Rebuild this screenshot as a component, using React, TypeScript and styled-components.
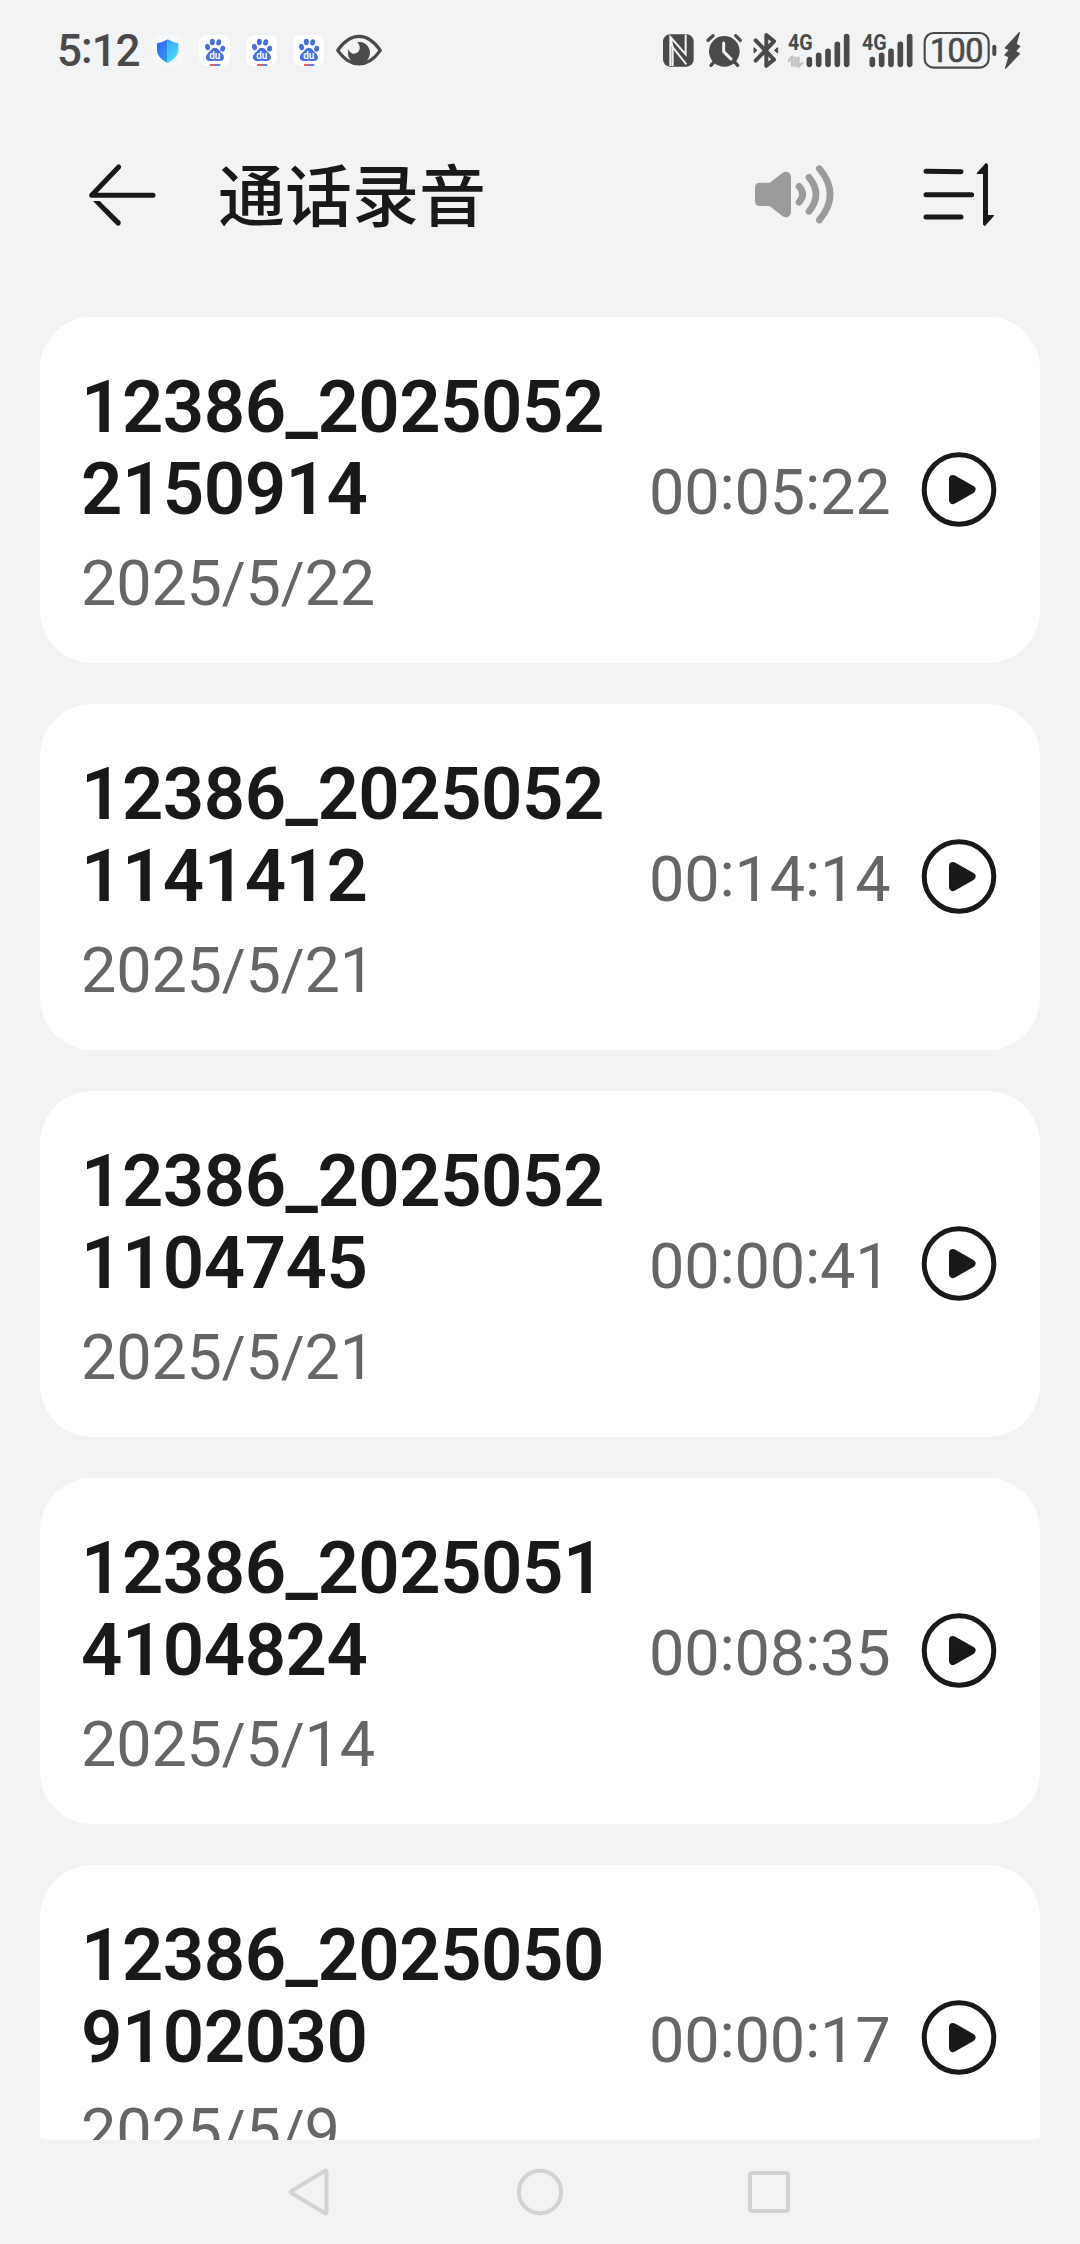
import React from 'react';
import styled, { createGlobalStyle } from 'styled-components';

const INK = '#191919';
const STATUS = '#4a4a4a';
const MUTED = '#666666';
const BG = '#f1f3f5';

const GlobalStyle = createGlobalStyle`
  * { box-sizing: border-box; }
  body {
    margin: 0;
    background: ${BG};
    font-family: Roboto, "Noto Sans CJK SC", sans-serif;
  }
`;

const Screen = styled.div`
  display: flex;
  flex-direction: column;
  width: 1080px;
  height: 2244px;
  background: ${BG};
  overflow: hidden;
`;

const StatusBar = styled.header`
  display: flex;
  justify-content: space-between;
  height: 90px;
  padding: 15px 53.3px 0 57px;
  color: ${STATUS};
`;

const StatusGroup = styled.div`
  display: flex;
  align-items: flex-start;
`;

const Clock = styled.span`
  width: 93px;
  font-size: 44px;
  font-weight: 500;
  line-height: 72px;
  letter-spacing: -1.4px;
  white-space: nowrap;
`;

const ClockColon = styled.span`
  margin: 0 0.5px;
  line-height: 1;
  vertical-align: 3px;
`;

const Glyph = styled.svg`
  display: block;
  flex: none;
  overflow: visible;
`;

const TitleBar = styled.div`
  display: flex;
  align-items: center;
  height: 110px;
  margin-top: 50px;
  padding: 0 75px 0 80px;
`;

const Title = styled.h1`
  flex: 1;
  margin: 0;
  padding: 0 0 7px 54px;
  font-family: "Noto Sans CJK SC", sans-serif;
  font-size: 67px;
  font-weight: 500;
  line-height: 103px;
  color: ${INK};
`;

const IconButton = styled.button<{ $tone?: string; $gap?: number }>`
  padding: 0;
  border: 0;
  margin-left: ${(p) => p.$gap || 0}px;
  background: none;
  color: ${(p) => p.$tone || INK};
`;

const List = styled.main`
  display: flex;
  flex-direction: column;
  gap: 41px;
  height: 1823px;
  margin: 67px 40px 0;
  overflow: hidden;
  border-radius: 0 0 10px 10px / 0 0 3px 3px;
`;

const Card = styled.article`
  display: flex;
  flex: none;
  align-items: center;
  height: 346px;
  padding: 0 43.5px 0 41px;
  border-radius: 52px;
  background: #fff;
`;

const Info = styled.div`
  flex: 1;
  min-width: 0;
  padding-top: 8px;
`;

const Name = styled.div`
  width: 540px;
  font-size: 72.5px;
  font-weight: 600;
  line-height: 82px;
  letter-spacing: -0.5px;
  word-break: break-all;
  color: ${INK};
`;

const DateText = styled.div`
  margin-top: 16px;
  font-size: 63px;
  line-height: 74px;
  letter-spacing: -0.2px;
  color: ${MUTED};
`;

const Slash = styled.span`
  font-size: 58px;
  line-height: 1;
  vertical-align: 2px;
`;

const Duration = styled.div`
  margin: 5px 30px 0 0;
  font-size: 63px;
  line-height: 74px;
  letter-spacing: -0.2px;
  white-space: nowrap;
  color: ${MUTED};
`;

const Colon = styled.span`
  vertical-align: 5px;
  line-height: 1;
`;

const NavBar = styled.nav`
  display: flex;
  justify-content: space-between;
  align-items: center;
  height: 104px;
  padding: 0 285px 0 285px;
`;

const recordings = [
  { name: '12386_20250522150914', date: '2025/5/22', duration: '00:05:22' },
  { name: '12386_20250521141412', date: '2025/5/21', duration: '00:14:14' },
  { name: '12386_20250521104745', date: '2025/5/21', duration: '00:00:41' },
  { name: '12386_20250514104824', date: '2025/5/14', duration: '00:08:35' },
  { name: '12386_20250509102030', date: '2025/5/9', duration: '00:00:17' },
];

const ShieldIcon = () => (
  <Glyph width="45" height="75" viewBox="330 0 135 225">
    <defs>
      <linearGradient id="shieldL" x1="0" y1="0" x2="0.6" y2="1">
        <stop offset="0" stopColor="#2a63f4" />
        <stop offset="1" stopColor="#2f95fb" />
      </linearGradient>
      <linearGradient id="shieldR" x1="0" y1="0" x2="0.3" y2="1">
        <stop offset="0" stopColor="#35a5fd" />
        <stop offset="1" stopColor="#4cdcfb" />
      </linearGradient>
    </defs>
    <rect x="338" y="60" width="92" height="93" rx="22" fill="#f6f7f9" />
    <path d="M383 73 Q366 84 351 85 V106 Q352 130 383 144Z" fill="url(#shieldL)" />
    <path d="M383 73 Q400 84 415 85 V106 Q414 130 383 144Z" fill="url(#shieldR)" />
  </Glyph>
);

const PawIcon = () => (
  <Glyph width="47" height="75" viewBox="0 0 141 225">
    <rect x="13" y="60" width="92" height="93" rx="22" fill="#fff" />
    <g fill="#4470e2">
      <ellipse cx="37.5" cy="96" rx="7.5" ry="9.5" transform="rotate(-12 37.5 96)" />
      <ellipse cx="52" cy="81" rx="7.5" ry="9.5" />
      <ellipse cx="71" cy="82" rx="7.5" ry="9.5" transform="rotate(10 71 82)" />
      <ellipse cx="83" cy="101" rx="7.5" ry="9" transform="rotate(12 83 101)" />
      <path d="M60 98 C69 98 73 108 79 113 C91 122 89 138 75 138 C68 138 66 137 60 137 C54 137 50 138 45 138 C30 138 29 122 40 113 C47 107 51 98 60 98Z" />
    </g>
    <text x="59.5" y="133" textAnchor="middle" fontFamily="Roboto, sans-serif" fontSize="30" fontWeight="600" fill="#fff">du</text>
    <path d="M45 150H60" stroke="#dd4150" strokeWidth="5" />
    <path d="M60 150H76" stroke="#4068de" strokeWidth="5" />
  </Glyph>
);

const EyeIcon = () => (
  <Glyph width="55" height="75" viewBox="888 0 165 225">
    <path d="M893 106 Q922 64 957 64 Q992 64 1021 106 Q992 147 957 147 Q922 147 893 106Z" fill="none" stroke="currentColor" strokeWidth="9.5" strokeLinejoin="round" />
    <path d="M952 81 A33 33 0 1 1 926 102 C930 117 941 119 951 113 C963 106 961 92 952 81Z" fill="currentColor" />
  </Glyph>
);

const NfcIcon = () => (
  <Glyph width="41.67" height="75" viewBox="60 0 125 225">
    <rect x="69" y="58" width="92" height="97" rx="21" fill="currentColor" />
    <path d="M91 153 V66 L137 118 V59 M91 66 L98 96 L139 148 M98 96 V153" fill="none" stroke={BG} strokeWidth="6" />
  </Glyph>
);

const AlarmIcon = () => (
  <Glyph width="45" height="75" viewBox="185 0 135 225">
    <g fill="none" stroke="currentColor" strokeWidth="10" strokeLinecap="round">
      <path d="M203 76 L218 62 M300 76 L286 62 M220 142 L212 151 M284 142 L292 151" />
    </g>
    <circle cx="252" cy="109" r="46" fill="currentColor" />
    <path d="M250 84 V110 L272 132" fill="none" stroke={BG} strokeWidth="9" strokeLinecap="round" strokeLinejoin="round" />
  </Glyph>
);

const BluetoothIcon = () => (
  <Glyph width="36.67" height="75" viewBox="320 0 110 225">
    <path d="M346 76 L401 134 L378 152 V60 L401 79 L346 137" fill="none" stroke="currentColor" strokeWidth="12" strokeLinecap="round" strokeLinejoin="round" />
    <path d="M341 98 L350 106 L341 114Z M412 98 L402 106 L412 114Z" fill="currentColor" stroke="currentColor" strokeWidth="3" />
  </Glyph>
);

const SignalIcon = ({ data, width }: { data?: boolean; width: number }) => (
  <Glyph width={width / 3} height="75" viewBox={`0 0 ${width} 225`}>
    <text x="15" y="105" fontFamily="Roboto, sans-serif" fontSize="64" fontWeight="700" fill="currentColor" textLength="74" lengthAdjust="spacingAndGlyphs">4G</text>
    {data && (
      <path d="M16 140 L28 125 V155 M60 142 L46 155 V125 M37 125V155" fill="none" stroke="#c3c5c7" strokeWidth="8" strokeLinejoin="round" />
    )}
    <path
      transform={data ? undefined : 'translate(-33 0)'}
      d="M79 134V148 M107 121V148 M135 109V148 M163 88V148 M191 65V148"
      stroke="currentColor"
      strokeWidth="17"
      strokeLinecap="round"
    />
  </Glyph>
);

const BatteryIcon = () => (
  <Glyph width="81.67" height="75" viewBox="835 0 245 225">
    <rect x="855" y="54" width="192" height="104" rx="27" fill="none" stroke="currentColor" strokeWidth="6.5" />
    <path d="M1064 95V117" stroke="currentColor" strokeWidth="12" strokeLinecap="round" />
    <text x="951" y="141" textAnchor="middle" fontFamily="Roboto, sans-serif" fontSize="97" fontWeight="400" stroke="currentColor" strokeWidth="2" fill="currentColor" textLength="160">100</text>
  </Glyph>
);

const BoltIcon = () => (
  <Glyph width="26.67" height="75" viewBox="1080 0 80 225">
    <path d="M1138 53 L1096 99 L1109 105 L1095 120 L1107 126 L1097 159 L1138 116 L1126 109 L1139 94 L1128 88Z" fill="currentColor" stroke="currentColor" strokeWidth="4" strokeLinejoin="round" />
  </Glyph>
);

const BackIcon = () => (
  <Glyph width="84" height="110" viewBox="60 0 252 330">
    <path d="M279 166 H95 L176 81" fill="none" stroke="currentColor" strokeWidth="15" strokeLinecap="round" strokeLinejoin="round" />
    <path d="M99 183 H119 L181 244 Q184 250 180 255 Q175 260 169 255Z" fill="currentColor" />
  </Glyph>
);

const SpeakerIcon = () => (
  <Glyph width="100" height="110" viewBox="75 0 300 330">
    <path d="M120 128 H149 L187 99 C198 91 213 97 213 112 V215 C213 230 198 236 187 228 L149 198 H120 Q105 198 105 183 V143 Q105 128 120 128Z" fill="currentColor" />
    <path d="M237 139 Q259 163 237 187 M267 112 Q309 163 267 214 M298 86 Q363 163 298 240" fill="none" stroke="currentColor" strokeWidth="20" strokeLinecap="round" />
  </Glyph>
);

const SortIcon = () => (
  <Glyph width="85" height="110" viewBox="600 0 255 330">
    <path d="M618 94 L723 95 M618 164 H755 M618 231 H723" stroke="currentColor" strokeWidth="15" strokeLinecap="round" />
    <path d="M798 71 L802 74 V227 H820 L794 256 L791 253 V100 H772Z" fill="currentColor" stroke="currentColor" strokeWidth="4" strokeLinejoin="round" />
  </Glyph>
);

const PlayIcon = () => (
  <Glyph width="76" height="76" viewBox="0 0 76 76">
    <circle cx="38" cy="37.5" r="34.8" fill="none" stroke="currentColor" strokeWidth="5" />
    <path d="M32 27 L50.5 37.5 L32 48Z" fill="currentColor" stroke="currentColor" strokeWidth="8" strokeLinejoin="round" />
  </Glyph>
);

function Separated({ value, mark, as: Mark }: { value: string; mark: string; as: React.ElementType }) {
  return (
    <>
      {value.split(mark).map((part, i) => (
        <React.Fragment key={i}>
          {i > 0 && <Mark>{mark}</Mark>}
          {part}
        </React.Fragment>
      ))}
    </>
  );
}

export default function App() {
  return (
    <>
      <GlobalStyle />
      <Screen>
        <StatusBar>
          <StatusGroup>
            <Clock>5<ClockColon>:</ClockColon>12</Clock>
            <ShieldIcon />
            <PawIcon />
            <PawIcon />
            <PawIcon />
            <EyeIcon />
          </StatusGroup>
          <StatusGroup>
            <NfcIcon />
            <AlarmIcon />
            <BluetoothIcon />
            <SignalIcon data width={222} />
            <SignalIcon width={183} />
            <BatteryIcon />
            <BoltIcon />
          </StatusGroup>
        </StatusBar>
        <TitleBar>
          <IconButton aria-label="返回"><BackIcon /></IconButton>
          <Title>通话录音</Title>
          <IconButton $tone="#9a9b9d"><SpeakerIcon /></IconButton>
          <IconButton $gap={75}><SortIcon /></IconButton>
        </TitleBar>
        <List>
          {recordings.map((r) => (
            <Card key={r.name}>
              <Info>
                <Name>{r.name}</Name>
                <DateText><Separated value={r.date} mark="/" as={Slash} /></DateText>
              </Info>
              <Duration><Separated value={r.duration} mark=":" as={Colon} /></Duration>
              <IconButton><PlayIcon /></IconButton>
            </Card>
          ))}
        </List>
        <NavBar>
          <Glyph width="48" height="52" viewBox="0 0 48 52" fill="none" stroke="#d2d2d2" strokeWidth="4" strokeLinejoin="round">
            <path d="M41.5 5.5 Q41.5 4 40 4.8 L6.5 25 Q5 26 6.5 27 L40 47.2 Q41.5 48 41.5 46.5Z" />
          </Glyph>
          <Glyph width="52" height="52" viewBox="0 0 52 52" fill="none" stroke="#d2d2d2" strokeWidth="4">
            <circle cx="26" cy="26" r="21.2" />
          </Glyph>
          <Glyph width="48" height="52" viewBox="0 0 48 52" fill="none" stroke="#d2d2d2" strokeWidth="4">
            <rect x="3" y="7" width="38" height="38" rx="2" />
          </Glyph>
        </NavBar>
      </Screen>
    </>
  );
}
